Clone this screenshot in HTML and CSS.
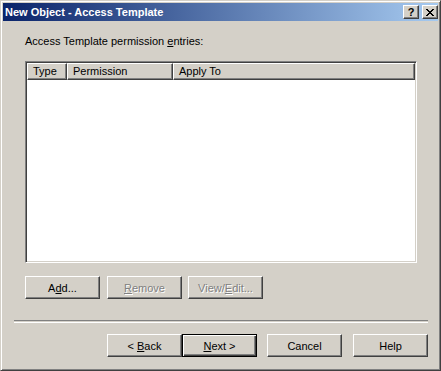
FILE: index.html
```html
<!DOCTYPE html>
<html lang="en">
<head>
    <meta charset="UTF-8">
    <title>New Object - Access Template</title>
    <link rel="stylesheet" href="styles.css">
</head>
<body>
    <div class="window">
        <div class="titlebar">
            <span class="title">New Object - Access Template</span>
            <div class="caption-buttons">
                <span class="cap-btn">?</span>
                <span class="cap-btn close">
                    <svg width="8" height="7" viewBox="0 0 8 7"><path d="M0 0h2v1h1v1h2v-1h1v-1h2v1h-1v1h-1v1h-1v1h1v1h1v1h1v1h-2v-1h-1v-1h-2v1h-1v1h-2v-1h1v-1h1v-1h1v-1h-1v-1h-1v-1h-1z" fill="#000"/></svg>
                </span>
            </div>
        </div>
        <div class="client">
            <div class="caption">Access Template permission <u>e</u>ntries:</div>
            <div class="listview">
                <div class="list-header">
                    <div class="col col-type">Type</div>
                    <div class="col col-perm">Permission</div>
                    <div class="col col-apply">Apply To</div>
                </div>
            </div>
            <div class="row-buttons">
                <button class="btn">A<u>d</u>d...</button>
                <button class="btn disabled"><u>R</u>emove</button>
                <button class="btn disabled">View/<u>E</u>dit...</button>
            </div>
            <div class="separator"></div>
            <div class="nav-buttons">
                <button class="btn">&lt; <u>B</u>ack</button>
                <button class="btn default"><u>N</u>ext &gt;</button>
                <button class="btn cancel">Cancel</button>
                <button class="btn help">Help</button>
            </div>
        </div>
    </div>
</body>
</html>
```

FILE: styles.css
```css
body {
    margin: 0;
    background-color: #d4d0c8;
    font-family: 'Liberation Sans', Arial, sans-serif;
    font-size: 11px;
}
.window {
    width: 441px;
    height: 371px;
    box-sizing: border-box;
    background-color: #d4d0c8;
    border: 1px solid;
    border-color: #d4d0c8 #404040 #404040 #d4d0c8;
    box-shadow: inset 1px 1px 0 #ffffff, inset -1px -1px 0 #808080;
    padding: 2px;
    display: flex;
    flex-direction: column;
}
.titlebar {
    height: 18px;
    background: linear-gradient(to right, #0a246a, #a6caf0);
    display: flex;
    align-items: center;
    justify-content: space-between;
    padding-left: 2px;
}
.title {
    color: #ffffff;
    font-weight: bold;
    font-size: 11px;
    line-height: 13px;
}
.caption-buttons {
    display: flex;
    gap: 3px;
    margin-right: 0px;
}
.cap-btn {
    width: 16px;
    height: 14px;
    box-sizing: border-box;
    background-color: #d4d0c8;
    border: 1px solid;
    border-color: #ffffff #404040 #404040 #ffffff;
    box-shadow: inset -1px -1px 0 #808080;
    display: flex;
    align-items: center;
    justify-content: center;
    font-weight: bold;
    font-size: 11px;
    line-height: 11px;
    color: #000000;
}
.cap-btn.close svg {
    display: block;
    margin-left: -1px;
}
.client {
    flex: 1;
    padding: 14px 10px 0 22px;
}
.caption {
    line-height: 13px;
    color: #000000;
}
.listview {
    margin-top: 13px;
    width: 392px;
    height: 202px;
    box-sizing: border-box;
    background-color: #ffffff;
    border: 1px solid;
    border-color: #808080 #ffffff #ffffff #808080;
    box-shadow: inset 1px 1px 0 #404040, inset -1px -1px 0 #d4d0c8;
    padding: 1px;
}
.list-header {
    display: flex;
    height: 17px;
}
.col {
    box-sizing: border-box;
    background-color: #d4d0c8;
    border: 1px solid;
    border-color: #ffffff #404040 #404040 #ffffff;
    box-shadow: inset -1px -1px 0 #808080;
    line-height: 14px;
    padding-left: 5px;
    white-space: nowrap;
}
.col-type {
    width: 40px;
}
.col-perm {
    width: 106px;
}
.col-apply {
    flex: 1;
}
.btn {
    width: 75px;
    height: 23px;
    box-sizing: border-box;
    background-color: #d4d0c8;
    border: 1px solid;
    border-color: #ffffff #404040 #404040 #ffffff;
    box-shadow: inset -1px -1px 0 #808080;
    font-family: 'Liberation Sans', Arial, sans-serif;
    font-size: 11px;
    color: #000000;
    padding: 0;
    margin: 0;
}
.btn.disabled {
    color: #808080;
    text-shadow: 1px 1px 0 #ffffff;
}
.btn.default {
    border: 1px solid #000000;
    box-shadow: inset 1px 1px 0 #ffffff, inset -1px -1px 0 #404040, inset -2px -2px 0 #808080;
}
.row-buttons {
    display: flex;
    gap: 7px;
    margin-top: 13px;
}
.row-buttons .btn:last-child {
    margin-left: -1px;
}
.separator {
    margin: 21px 0 0 -11px;
    width: 414px;
    height: 1px;
    border-top: 1px solid #808080;
    border-bottom: 1px solid #ffffff;
}
.nav-buttons {
    display: flex;
    justify-content: flex-end;
    margin-top: 11px;
}
.btn.cancel {
    margin-left: 10px;
}
.btn.help {
    margin-left: 11px;
}
```
